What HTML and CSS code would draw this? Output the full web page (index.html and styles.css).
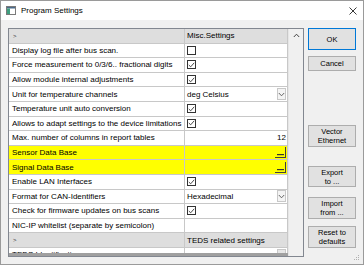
FILE: index.html
```html
<!DOCTYPE html>
<html>
<head>
<meta charset="utf-8">
<link rel="stylesheet" href="styles.css">
</head>
<body>
<div class="window">
  <div class="titlebar">
    <svg class="appicon" width="10" height="9" viewBox="0 0 10 9">
      <rect x="0.5" y="0.5" width="9" height="8" fill="#fff" stroke="#7a7a7a"/>
      <rect x="1" y="1" width="8" height="1.5" fill="#4a6a8a"/>
      <rect x="1" y="2.5" width="3" height="5.5" fill="#3f9f7f"/>
    </svg>
    <span class="title">Program Settings</span>
    <svg class="close" width="8" height="8" viewBox="0 0 8 8">
      <path d="M0.5 0.5 L7.5 7.5 M7.5 0.5 L0.5 7.5" stroke="#222" stroke-width="0.9" fill="none"/>
    </svg>
  </div>
  <div class="client">
    <div class="gridbox">
      <div class="grid">
        <div class="rows">
          <div class="row header"><div class="name"><span class="glyph">&gt;</span></div><div class="value">Misc.Settings</div></div>
          <div class="row"><div class="name">Display log file after bus scan.</div><div class="value"><span class="check"></span></div></div>
          <div class="row"><div class="name">Force measurement to 0/3/6.. fractional digits</div><div class="value"><span class="check on"><svg width="7" height="6" viewBox="0 0 7 6"><path d="M0.8 3 L2.7 4.8 L6.2 0.8" stroke="#333" stroke-width="0.9" fill="none"/></svg></span></div></div>
          <div class="row"><div class="name">Allow module internal adjustments</div><div class="value"><span class="check on"><svg width="7" height="6" viewBox="0 0 7 6"><path d="M0.8 3 L2.7 4.8 L6.2 0.8" stroke="#333" stroke-width="0.9" fill="none"/></svg></span></div></div>
          <div class="row"><div class="name">Unit for temperature channels</div><div class="value combo"><span>deg Celsius</span><span class="drop"><svg width="7" height="5" viewBox="0 0 7 5"><path d="M0.8 1 L3.5 3.8 L6.2 1" stroke="#555" stroke-width="0.9" fill="none"/></svg></span></div></div>
          <div class="row"><div class="name">Temperature unit auto conversion</div><div class="value"><span class="check on"><svg width="7" height="6" viewBox="0 0 7 6"><path d="M0.8 3 L2.7 4.8 L6.2 0.8" stroke="#333" stroke-width="0.9" fill="none"/></svg></span></div></div>
          <div class="row"><div class="name">Allows to adapt settings to the device limitations</div><div class="value"><span class="check on"><svg width="7" height="6" viewBox="0 0 7 6"><path d="M0.8 3 L2.7 4.8 L6.2 0.8" stroke="#333" stroke-width="0.9" fill="none"/></svg></span></div></div>
          <div class="row"><div class="name">Max. number of columns in report tables</div><div class="value num">12</div></div>
          <div class="row hl"><div class="name">Sensor Data Base</div><div class="value combo"><span></span><span class="ellip"><svg width="7" height="2" viewBox="0 0 7 2"><rect x="0" y="0" width="7" height="1.2" fill="#333"/></svg></span></div></div>
          <div class="row hl"><div class="name">Signal Data Base</div><div class="value combo"><span></span><span class="ellip"><svg width="7" height="2" viewBox="0 0 7 2"><rect x="0" y="0" width="7" height="1.2" fill="#333"/></svg></span></div></div>
          <div class="row"><div class="name">Enable LAN Interfaces</div><div class="value"><span class="check on"><svg width="7" height="6" viewBox="0 0 7 6"><path d="M0.8 3 L2.7 4.8 L6.2 0.8" stroke="#333" stroke-width="0.9" fill="none"/></svg></span></div></div>
          <div class="row"><div class="name">Format for CAN-Identifiers</div><div class="value combo"><span>Hexadecimal</span><span class="drop"><svg width="7" height="5" viewBox="0 0 7 5"><path d="M0.8 1 L3.5 3.8 L6.2 1" stroke="#555" stroke-width="0.9" fill="none"/></svg></span></div></div>
          <div class="row"><div class="name">Check for firmware updates on bus scans</div><div class="value"><span class="check on"><svg width="7" height="6" viewBox="0 0 7 6"><path d="M0.8 3 L2.7 4.8 L6.2 0.8" stroke="#333" stroke-width="0.9" fill="none"/></svg></span></div></div>
          <div class="row"><div class="name">NIC-IP whitelist (separate by semicolon)</div><div class="value"></div></div>
          <div class="row header"><div class="name"><span class="glyph">&gt;</span></div><div class="value">TEDS related settings</div></div>
          <div class="row"><div class="name">TEDS Identification</div><div class="value combo"><span></span><span class="drop small"></span></div></div>
        </div>
        <div class="hbar"></div>
      </div>
      <div class="vscroll">
        <svg width="7" height="5" viewBox="0 0 7 5"><path d="M0.8 4 L3.5 1.2 L6.2 4" stroke="#444" stroke-width="1" fill="none"/></svg>
      </div>
    </div>
    <div class="buttons">
      <button class="btn ok">OK</button>
      <button class="btn cancel">Cancel</button>
      <button class="btn vector">Vector<br>Ethernet</button>
      <button class="btn export">Export<br>to ...</button>
      <button class="btn import">Import<br>from ...</button>
      <button class="btn reset">Reset to<br>defaults</button>
    </div>
  </div>
  <svg class="grip" width="6" height="6" viewBox="0 0 6 6">
    <rect x="4" y="0" width="1" height="1" fill="#b0b0b0"/>
    <rect x="2" y="2" width="1" height="1" fill="#b0b0b0"/>
    <rect x="4" y="2" width="1" height="1" fill="#b0b0b0"/>
    <rect x="0" y="4" width="1" height="1" fill="#b0b0b0"/>
    <rect x="2" y="4" width="1" height="1" fill="#b0b0b0"/>
    <rect x="4" y="4" width="1" height="1" fill="#b0b0b0"/>
  </svg>
</div>
</body>
</html>
```

FILE: styles.css
```css
* { box-sizing: border-box; }
html, body { margin: 0; padding: 0; background: #ffffff; }
body { font-family: "Liberation Sans", Arial, sans-serif; font-size: 8px; color: #000; }

.window {
  position: relative;
  width: 364px;
  height: 265px;
  border: 1px solid #9a9a9a;
  background: #f0f0f0;
  display: flex;
  flex-direction: column;
}

.titlebar {
  height: 19px;
  background: #ffffff;
  display: flex;
  align-items: center;
  padding-left: 5px;
  padding-right: 6px;
}
.appicon { display: block; margin-right: 5px; }
.title { font-size: 8px; flex: 1; }
.close { display: block; }

.client {
  display: flex;
  padding: 8px 7px 0 7px;
  flex: 1;
}

.gridbox {
  width: 296px;
  height: 229px;
  border: 1px solid #828790;
  background: #f0f0f0;
  display: flex;
}
.grid {
  width: 279px;
  display: flex;
  flex-direction: column;
}
.rows {
  height: 224px;
  overflow: hidden;
  background: #ffffff;
}
.hbar { height: 3px; background: #a0a0a0; }

.row {
  display: grid;
  grid-template-columns: 176px 103px;
  height: 14.6px;
  border-bottom: 1px solid #c8c8c8;
  background: #ffffff;
}
.row .name {
  border-right: 1px solid #c8c8c8;
  padding-left: 3px;
  display: flex;
  align-items: center;
  white-space: nowrap;
  overflow: hidden;
}
.row .value {
  border-right: 1px solid #c8c8c8;
  padding-left: 2px;
  padding-right: 1px;
  display: flex;
  align-items: center;
  white-space: nowrap;
}
.row.header { background: #dedede; }
.glyph { font-size: 6px; color: #333; padding-left: 1px; }
.row.hl { background: #ffff00; }

.check {
  width: 9px;
  height: 9px;
  border: 1px solid #333;
  background: #fff;
  display: flex;
  align-items: center;
  justify-content: center;
}
.check svg { display: block; }

.combo { justify-content: space-between; }
.num { justify-content: flex-end; }

.drop {
  width: 9px;
  height: 12px;
  border: 1px solid #c8c8c8;
  background: #f4f4f4;
  display: flex;
  align-items: center;
  justify-content: center;
}
.drop svg { display: block; }
.drop.small { background: #e6e6e6; }

.ellip {
  width: 11px;
  height: 11px;
  border-right: 1px solid #404040;
  border-bottom: 1px solid #404040;
  display: flex;
  align-items: flex-end;
  justify-content: center;
  padding-bottom: 1px;
}
.ellip svg { display: block; }

.vscroll {
  width: 15px;
  background: #f0f0f0;
  border-left: 1px solid #e6e6e6;
  display: flex;
  justify-content: center;
  padding-top: 4px;
}
.vscroll svg { display: block; }

.buttons {
  display: flex;
  flex-direction: column;
  margin-left: 4px;
  width: 48px;
}
.btn {
  font-family: "Liberation Sans", Arial, sans-serif;
  font-size: 7.5px;
  line-height: 9px;
  color: #000;
  background: #e1e1e1;
  border: 1px solid #adadad;
  padding: 0;
  width: 48px;
  text-align: center;
}
.ok { height: 22px; border: 1px solid #0078d7; }
.cancel { height: 15px; margin-top: 6px; }
.vector { height: 22px; margin-top: 54px; }
.export { height: 21px; margin-top: 19px; }
.import { height: 22px; margin-top: 10px; }
.reset { height: 22px; margin-top: 7px; }

.grip { position: absolute; right: 3px; bottom: 3px; }
```
